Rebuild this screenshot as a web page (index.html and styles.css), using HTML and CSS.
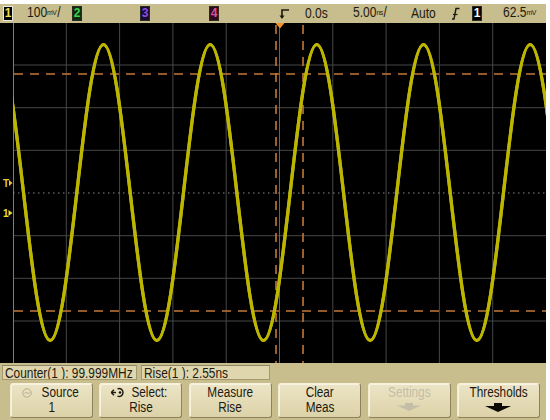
FILE: index.html
```html
<!DOCTYPE html>
<html>
<head>
<meta charset="utf-8">
<link rel="stylesheet" href="styles.css">
</head>
<body>
<div class="scope">
  <div class="topbar">
    <div class="cell"><span class="ch ch1">1</span></div>
    <div class="cell txt"><span class="sq">100<span class="unit">mV</span>/</span></div>
    <div class="cell"><span class="ch ch2">2</span></div>
    <div class="cell"><span class="ch ch3">3</span></div>
    <div class="cell"><span class="ch ch4">4</span></div>
    <div class="cell">
      <svg class="trig-icon" width="12" height="12" viewBox="0 0 12 12">
        <path d="M11 2 H4 V10" fill="none" stroke="#1c1a10" stroke-width="1.6"/>
        <path d="M1.5 7.5 L4 11 L6.5 7.5 Z" fill="#1c1a10"/>
      </svg>
    </div>
    <div class="cell txt"><span class="sq">0.0s</span></div>
    <div class="cell txt"><span class="sq">5.00<span class="unit">ns</span>/</span></div>
    <div class="cell txt"><span class="sq">Auto</span></div>
    <div class="cell">
      <svg class="edge" width="9" height="13" viewBox="0 0 9 13">
        <path d="M1 12 H3 L5 1.5 H8.5" fill="none" stroke="#1c1a10" stroke-width="1.4"/>
        <path d="M2 7.5 H6.5" stroke="#1c1a10" stroke-width="1.2"/>
      </svg>
    </div>
    <div class="cell"><span class="ch chsrc">1</span></div>
    <div class="cell txt"><span class="sq">62.5<span class="unit">mV</span></span></div>
  </div>

  <svg class="screen" width="546" height="340" viewBox="0 23 546 340">
    <defs>
      <clipPath id="plot"><rect x="13" y="23" width="533" height="340"/></clipPath>
    </defs>
    <rect x="0" y="23" width="546" height="340" fill="#000"/>
    <g stroke="#474747" stroke-width="1">
      <line x1="66.3" y1="23" x2="66.3" y2="363"/>
      <line x1="119.6" y1="23" x2="119.6" y2="363"/>
      <line x1="172.9" y1="23" x2="172.9" y2="363"/>
      <line x1="226.2" y1="23" x2="226.2" y2="363"/>
      <line x1="332.8" y1="23" x2="332.8" y2="363"/>
      <line x1="386.1" y1="23" x2="386.1" y2="363"/>
      <line x1="439.4" y1="23" x2="439.4" y2="363"/>
      <line x1="492.7" y1="23" x2="492.7" y2="363"/>
      <line x1="13" y1="65" x2="546" y2="65"/>
      <line x1="13" y1="107.7" x2="546" y2="107.7"/>
      <line x1="13" y1="150.3" x2="546" y2="150.3"/>
      <line x1="13" y1="235.7" x2="546" y2="235.7"/>
      <line x1="13" y1="278.3" x2="546" y2="278.3"/>
      <line x1="13" y1="321" x2="546" y2="321"/>
    </g>
    <line x1="13.5" y1="23" x2="13.5" y2="363" stroke="#7c7c7c" stroke-width="1"/>
    <line x1="279.5" y1="23" x2="279.5" y2="363" stroke="#5c6470" stroke-width="1"/>
    <line x1="13" y1="193" x2="546" y2="193" stroke="#8a8a8a" stroke-width="1" stroke-dasharray="1.5 3.5"/>
    <g stroke="#c47838" stroke-width="1.6" stroke-dasharray="9 7" fill="none">
      <line x1="14" y1="74" x2="546" y2="74"/>
      <line x1="14" y1="311" x2="546" y2="311"/>
      <line x1="276" y1="25" x2="276" y2="363"/>
      <line x1="303" y1="25" x2="303" y2="363"/>
    </g>
    <g clip-path="url(#plot)" fill="none">
      <path id="wave" d="M -3.17,44.5
        c 9.651,0 17.97,72.18 26.667,148 c 8.697,75.82 17.016,148 26.667,148 c 9.651,0 17.97,-72.18 26.667,-148 c 8.697,-75.82 17.016,-148 26.667,-148
        c 9.651,0 17.97,72.18 26.667,148 c 8.697,75.82 17.016,148 26.667,148 c 9.651,0 17.97,-72.18 26.667,-148 c 8.697,-75.82 17.016,-148 26.667,-148
        c 9.651,0 17.97,72.18 26.667,148 c 8.697,75.82 17.016,148 26.667,148 c 9.651,0 17.97,-72.18 26.667,-148 c 8.697,-75.82 17.016,-148 26.667,-148
        c 9.651,0 17.97,72.18 26.667,148 c 8.697,75.82 17.016,148 26.667,148 c 9.651,0 17.97,-72.18 26.667,-148 c 8.697,-75.82 17.016,-148 26.667,-148
        c 9.651,0 17.97,72.18 26.667,148 c 8.697,75.82 17.016,148 26.667,148 c 9.651,0 17.97,-72.18 26.667,-148 c 8.697,-75.82 17.016,-148 26.667,-148
        c 9.651,0 17.97,72.18 26.667,148 c 8.697,75.82 17.016,148 26.667,148 c 9.651,0 17.97,-72.18 26.667,-148 c 8.697,-75.82 17.016,-148 26.667,-148"
        stroke="#bdb600" stroke-width="3.2"/>
      <use href="#wave" stroke="#fbf52a" stroke-width="1.7"/>
    </g>
    <polygon points="275.5,23 284.5,23 280,28.5" fill="#f0922e"/>
    <text x="3" y="187" class="mk mk-t">T</text>
    <polygon points="9,180 12.5,183 9,186" fill="#e8c63a"/>
    <text x="3" y="217" class="mk mk-1">1</text>
    <polygon points="8.5,210 12.5,213 8.5,216" fill="#e6e036"/>
  </svg>

  <div class="bottom">
    <div class="meas">
      <div class="mbox counter"><span class="sq">Counter(1 ): 99.999MHz</span></div>
      <div class="mbox rise"><span class="sq">Rise(1 ): 2.55ns</span></div>
    </div>
    <div class="softkeys">
      <div class="key">
        <div class="line">
          <svg class="ico faded" width="12" height="10" viewBox="0 0 12 10">
            <circle cx="6" cy="5" r="4.2" fill="none" stroke="#b4ad8c" stroke-width="1"/>
            <path d="M3.4 5.6 Q4.6 3.6 6 5 T8.6 4.4" fill="none" stroke="#b4ad8c" stroke-width="1"/>
          </svg>
          <span class="sq c">Source</span>
        </div>
        <div class="line"><span class="sq c">1</span></div>
      </div>
      <div class="key">
        <div class="line">
          <svg class="ico" width="14" height="11" viewBox="0 0 14 11">
            <path d="M6.5 1.8 A4 4 0 1 1 6.5 9.2" fill="none" stroke="#1c1a10" stroke-width="1.4"/>
            <path d="M0.5 5.5 H5" stroke="#1c1a10" stroke-width="1.4"/>
            <path d="M3 2.8 L0.3 5.5 L3 8.2" fill="none" stroke="#1c1a10" stroke-width="1.4"/>
            <circle cx="9" cy="5.5" r="1.3" fill="#1c1a10"/>
          </svg>
          <span class="sq c">Select:</span>
        </div>
        <div class="line"><span class="sq c">Rise</span></div>
      </div>
      <div class="key">
        <div class="line"><span class="sq c">Measure</span></div>
        <div class="line"><span class="sq c">Rise</span></div>
      </div>
      <div class="key">
        <div class="line"><span class="sq c">Clear</span></div>
        <div class="line"><span class="sq c">Meas</span></div>
      </div>
      <div class="key disabled">
        <div class="line"><span class="sq c">Settings</span></div>
        <div class="line arrow-line">
          <svg width="24" height="8" viewBox="0 0 24 8">
            <polygon points="8,0 16,0 16,2.5 24,2.5 12,8 0,2.5 8,2.5" fill="#c4bea6"/>
          </svg>
        </div>
      </div>
      <div class="key">
        <div class="line"><span class="sq c">Thresholds</span></div>
        <div class="line arrow-line">
          <svg width="26" height="9" viewBox="0 0 26 9">
            <polygon points="9,0 17,0 17,3 26,3 13,9 0,3 9,3" fill="#0c0a04"/>
          </svg>
        </div>
      </div>
    </div>
  </div>
</div>
</body>
</html>
```

FILE: styles.css
```css
html, body {
  margin: 0;
  padding: 0;
  background: #ffffff;
}

body {
  width: 550px;
  height: 420px;
  overflow: hidden;
  font-family: "Liberation Sans", Arial, sans-serif;
  color: #1c1a10;
}

.scope {
  width: 546px;
  padding-top: 4px;
}

/* condensed text (narrow face look) */
.sq {
  display: inline-block;
  white-space: nowrap;
  transform: scaleX(0.84);
  transform-origin: left center;
}

.sq.c {
  transform-origin: center center;
}

/* ---------- top status bar ---------- */
.topbar {
  height: 19px;
  background: #c8bd8c;
  display: grid;
  grid-template-columns: 27px 45px 68px 69px 68px 28px 48px 58px 39px 22px 31px 43px;
  align-items: center;
}

.cell {
  display: flex;
  align-items: center;
  height: 19px;
  overflow: visible;
}

.txt {
  font-size: 14px;
  line-height: 19px;
  white-space: nowrap;
}

.txt .sq {
  transform: scaleX(0.86);
}

.unit {
  display: inline-block;
  font-size: 8px;
  letter-spacing: -0.6px;
  position: relative;
  top: -2px;
  margin: 0 1px 0 0;
}

.ch {
  display: inline-block;
  width: 8px;
  height: 13px;
  line-height: 13px;
  font-size: 12px;
  font-weight: bold;
  text-align: center;
  background: #000;
  border: 1px solid #2a2a20;
}

.ch1 {
  margin-left: 3px;
  color: #e8e050;
  border-color: #e8e8e0;
}

.ch2 {
  color: #3fd04a;
  background: #0f2a12;
}

.ch3 {
  color: #8a4ee0;
  background: #1a0c30;
}

.ch4 {
  color: #e0509a;
  background: #2e0a1c;
}

.chsrc {
  color: #ffffff;
  background: #000000;
}

.trig-icon {
  display: block;
  margin-left: 1px;
}

.edge {
  display: block;
  margin-left: 1px;
}

/* ---------- screen ---------- */
.screen {
  display: block;
}

.mk {
  font-family: "Liberation Sans", Arial, sans-serif;
  font-size: 10px;
  font-weight: bold;
}

.mk-t {
  fill: #e8c63a;
}

.mk-1 {
  fill: #e6e036;
}

/* ---------- bottom panel ---------- */
.bottom {
  height: 57px;
  background: #c8bd8c;
}

.meas {
  display: flex;
  gap: 4px;
  padding: 2px 0 0 2px;
}

.mbox {
  height: 15px;
  line-height: 14px;
  font-size: 14px;
  padding-left: 2px;
  background: #e0d6ae;
  border: 1px solid #a39970;
  border-top-color: #8e8562;
  box-sizing: border-box;
  white-space: nowrap;
  overflow: hidden;
}

.mbox .sq {
  transform: scaleX(0.85);
}

.counter {
  width: 135px;
}

.rise {
  width: 129px;
}

.softkeys {
  display: flex;
  gap: 6.4px;
  padding: 3px 0 0 10px;
}

.key {
  width: 83px;
  height: 35px;
  box-sizing: border-box;
  border-radius: 3px;
  background: linear-gradient(#ece4c6, #dcd2a8);
  border: 1px solid;
  border-color: #f7f1da #8c835e #8c835e #f2ecd2;
  box-shadow: inset 1px 1px 0 #f8f3e0;
  padding-top: 1px;
  display: flex;
  flex-direction: column;
  align-items: center;
}

.line {
  height: 15px;
  line-height: 15px;
  font-size: 14px;
  display: flex;
  align-items: center;
  justify-content: center;
  white-space: nowrap;
}

.ico {
  display: block;
  margin-right: 3px;
}

.ico.faded {
  margin-right: 5px;
}

.disabled {
  color: #c4bea6;
}

.arrow-line {
  align-items: flex-start;
  padding-top: 3px;
}

.arrow-line svg {
  display: block;
}
```
